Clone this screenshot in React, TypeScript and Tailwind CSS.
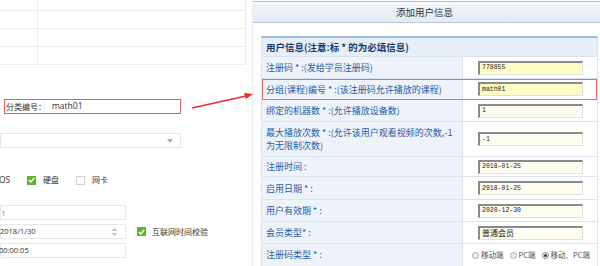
import React from "react";

const font = { fontFamily: '"Noto Sans CJK SC", "Liberation Sans", sans-serif' };
const mono = { fontFamily: '"Liberation Mono", "Noto Sans CJK SC", monospace' };
const latin = { fontFamily: '"Open Sans", "Liberation Sans", "Noto Sans CJK SC", sans-serif' };

function Cb({ checked }: { checked?: boolean }) {
  return checked ? (
    <span className="inline-flex w-[9px] h-[9px] bg-[#5cb531] items-center justify-center">
      <svg width="7" height="6" viewBox="0 0 7 6"><path d="M0.8 3 L2.8 5 L6.2 1" stroke="#fff" strokeWidth="1.4" fill="none" /></svg>
    </span>
  ) : (
    <span className="inline-block w-[9px] h-[9px] border border-[#d0d0d0] bg-white" />
  );
}

function Row({ label, label2, value, yellow, h = "h-[22px]", red, cjk }: { label: string; label2?: string; value?: string; yellow?: boolean; h?: string; red?: boolean; cjk?: boolean }) {
  return (
    <div className={`flex ${h} border-b border-[#d9e3ef] ${red ? "outline outline-1 outline-[#ee6b6b] -outline-offset-1" : ""}`}>
      <div className="w-[201px] bg-[#eef3fa] border-r border-[#d9e3ef] pl-[4px] flex flex-col justify-center text-[9px] leading-[13px] text-[#1f5ca6] whitespace-nowrap">
        <div>{label}</div>
        {label2 && <div>{label2}</div>}
      </div>
      <div className="flex-1 bg-white flex items-center pl-[15px]">
        {value !== undefined && (
          <div
            className={`w-[105px] h-[14px] border-t-[2px] border-l-[2px] border-[#8a8a8a] border-b border-r border-b-[#e0e0e0] border-r-[#e0e0e0] flex items-center pl-[2px] text-[#222] whitespace-nowrap ${cjk ? "text-[8px]" : "text-[6.5px]"} ${yellow ? "bg-[#fcfcc4]" : "bg-[#fdfdf2]"}`}
            style={cjk ? font : mono}
          >
            {value}
          </div>
        )}
      </div>
    </div>
  );
}

export default function App() {
  return (
    <div className="relative w-[600px] h-[266px] overflow-hidden bg-white flex" style={font}>
      {/* Left panel */}
      <div className="w-[252px] shrink-0 bg-white flex flex-col">
        <div className="w-[246px] border-r border-[#e8e8e8]">
          {["h-[11px]", "h-[18px]", "h-[18px]", "h-[18px]"].map((h, i) => (
            <div key={i} className={`flex ${h} border-b border-[#ececec]`}>
              <div className="w-[38px] border-r border-[#ececec]" />
              <div className="flex-1" />
            </div>
          ))}
        </div>
        <div className="ml-[4px] mt-[34px] w-[177px] h-[15px] border border-[#f25b5b] flex items-center whitespace-nowrap">
          <span className="text-[8px] text-[#333] pl-[1px] w-[39px] leading-none">分类编号：</span>
          <span className="h-full border-l border-[#f0f0f0] pl-[7px] flex items-center text-[8.5px] text-[#333]" style={latin}>math01</span>
        </div>
        <div className="mt-[19px] w-[181px] h-[15px] border border-[#e6e6e6] flex items-center justify-end pr-[7px]">
          <svg width="6" height="4" viewBox="0 0 6 4"><path d="M0 0 L6 0 L3 4 Z" fill="#aaa" /></svg>
        </div>
        <div className="mt-[27px] h-[10px] flex items-center text-[8px] text-[#333] whitespace-nowrap">
          <span className="ml-[-1px] w-[28px] text-[8.5px]" style={latin}>OS</span>
          <Cb checked />
          <span className="ml-[7px] w-[33px]">硬盘</span>
          <Cb />
          <span className="ml-[7px]">网卡</span>
        </div>
        <div className="mt-[20px] w-[126px] h-[15px] border border-[#e8e8e8] flex items-center text-[8px] text-[#4a90d9]" style={latin}>1</div>
        <div className="mt-[4px] flex items-center whitespace-nowrap">
          <div className="w-[126px] h-[15px] border border-[#e8e8e8] flex items-center justify-between text-[7.5px] text-[#333] pr-[8px]" style={latin}>
            <span className="ml-[-1px]">2018/1/30</span>
            <svg width="5" height="8" viewBox="0 0 5 8"><path d="M0 3 L2.5 0 L5 3 Z M0 5 L2.5 8 L5 5 Z" fill="#bbb" /></svg>
          </div>
          <span className="ml-[11px] flex"><Cb checked /></span>
          <span className="ml-[6px] text-[8px] text-[#333]">互联网时间校验</span>
        </div>
        <div className="mt-[4px] w-[126px] h-[15px] border border-[#e8e8e8] flex items-center text-[7.5px] text-[#333]" style={latin}>
          <span className="ml-[-2px]">00:00:05</span>
        </div>
      </div>

      {/* Right panel */}
      <div className="flex-1 flex flex-col bg-[#fafcfe] border-l border-[#e6ebf1] pl-[4px]">
        <div className="h-[25px] mt-[1px] border-t border-[#a9c3df] border-b border-b-[#b7c9de] bg-gradient-to-b from-[#f4f7fb] to-[#e2eaf4] flex items-center justify-center text-[9.5px] text-[#333] -ml-[4px] pr-[4px]">
          添加用户信息
        </div>
        <div className="h-[15px] bg-white" />
        <div className="ml-[4px] w-[337px] border-t-[2px] border-[#9dbbdc] border-l border-r border-l-[#d9e3ef] border-r-[#d9e3ef] bg-white">
          <div className="h-[19px] bg-[#e6eef8] border-b border-[#d9e3ef] flex items-center pl-[4px] text-[9.5px] font-bold text-[#17396a] whitespace-nowrap">
            用户信息(注意:标 * 的为必填信息)
          </div>
          <Row label="注册码 * :(发给学员注册码)" value="778855" yellow />
          <Row label="分组(课程)编号 * :(该注册码允许播放的课程)" value="math01" yellow red h="h-[21px]" />
          <Row label="绑定的机器数 * :(允许播放设备数)" value="1" />
          <Row label="最大播放次数 * :(允许该用户观看视频的次数,-1" label2="为无限制次数)" value="-1" h="h-[35px]" />
          <Row label="注册时间 :" value="2018-01-25" h="h-[20px]" />
          <Row label="启用日期 * :" value="2018-01-25" h="h-[23px]" />
          <Row label="用户有效期 * :" value="2020-12-30" />
          <Row label="会员类型* :" value="普通会员" cjk />
          <div className="flex h-[22px]">
            <div className="w-[201px] bg-[#eef3fa] border-r border-[#d9e3ef] pl-[4px] flex items-center text-[9px] text-[#1f5ca6] whitespace-nowrap">注册码类型 * :</div>
            <div className="flex-1 flex items-center pl-[9px] text-[7.5px] text-[#555] whitespace-nowrap">
              <span className="inline-block w-[7px] h-[7px] rounded-full border border-[#aaa] bg-[#eee]" />
              <span className="ml-[2px]">移动端</span>
              <span className="ml-[6px] inline-block w-[7px] h-[7px] rounded-full border border-[#aaa] bg-[#eee]" />
              <span className="ml-[2px]">PC端</span>
              <span className="ml-[6px] inline-flex w-[7px] h-[7px] rounded-full border border-[#888] bg-[#eee] items-center justify-center"><span className="w-[3px] h-[3px] rounded-full bg-[#333]" /></span>
              <span className="ml-[2px]">移动、PC端</span>
            </div>
          </div>
        </div>
      </div>

      {/* Arrow */}
      <svg className="absolute left-0 top-0 pointer-events-none" width="600" height="266">
        <line x1="192" y1="108" x2="246" y2="96" stroke="#ee2a2a" strokeWidth="1.5" />
        <path d="M253 94 L244 93 L246 99 Z" fill="#ee2a2a" />
      </svg>
    </div>
  );
}
